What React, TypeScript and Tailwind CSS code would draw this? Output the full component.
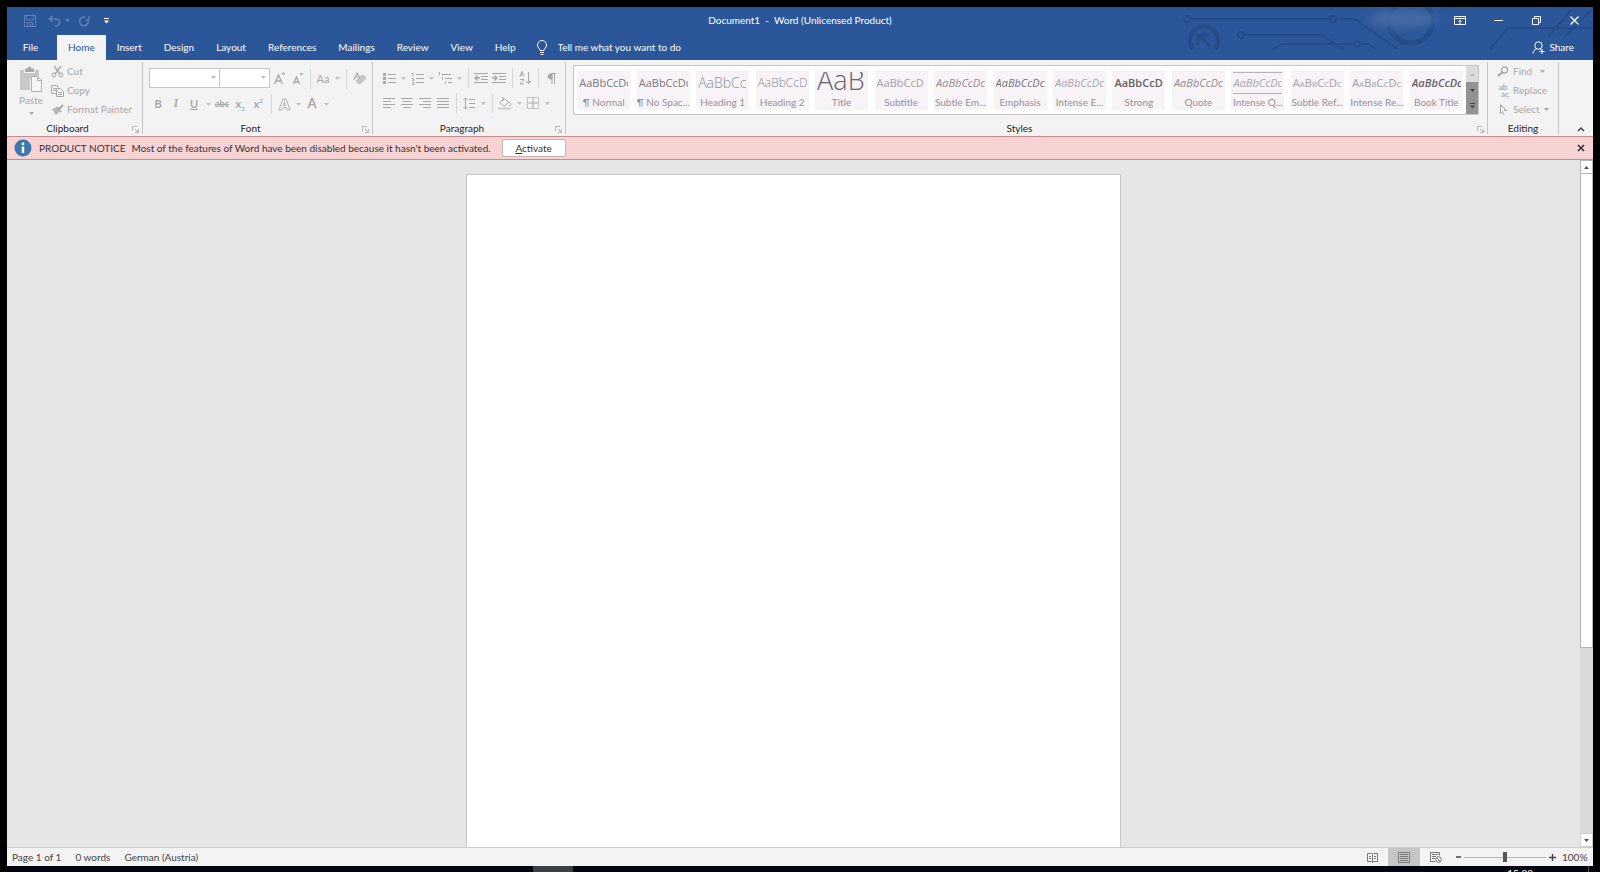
import { ReactNode, useState } from "react";
import clsx from "clsx";

interface IconProps {
  w: number;
  h: number;
  className?: string;
  children: ReactNode;
}

function Icon({ w, h, className, children }: IconProps) {
  return (
    <svg
      width={w}
      height={h}
      viewBox={`0 0 ${w} ${h}`}
      fill="none"
      stroke="currentColor"
      className={clsx("shrink-0", className)}
      aria-hidden="true">
      {children}
    </svg>
  );
}

function CaretIcon() {
  return (
    <Icon w={5} h={3}>
      <path d="M0 0h5L2.500 3z" fill="currentColor" stroke="none" />
    </Icon>
  );
}

function Caret({ label }: { label: string }) {
  return (
    <button aria-label={label} className="flex h-5 w-[10px] items-center justify-center text-[#c0c0c0]">
      <CaretIcon />
    </button>
  );
}

function Tool({ label, children }: { label: string; children: ReactNode }) {
  return (
    <button aria-label={label} className="flex h-5 w-[18px] items-center justify-center text-[#a8a8a8]">
      {children}
    </button>
  );
}

function Sep() {
  return (
    <span className="flex w-2 justify-center">
      <span className="h-5 w-px bg-[#d6d6d6]" />
    </span>
  );
}

interface GroupProps {
  name: string;
  launcher?: boolean;
  className?: string;
  children: ReactNode;
}

function Group({ name, launcher, className, children }: GroupProps) {
  return (
    <section
      aria-label={name}
      className={clsx("my-[2px] flex flex-col border-r border-[#c6c6c6]", className)}>
      <div className="h-[60px]">{children}</div>
      <div
        className={clsx(
          "relative flex h-3 items-center justify-center text-[#262626]",
          launcher && "pr-[14px]"
        )}>
        {name}
        {launcher && (
          <button aria-label={`${name} settings`} className="absolute right-[3px] bottom-[1px] text-[#b8b8b8]">
            <Icon w={7} h={7}>
              <path d="M.5 5V.5H5M3 3l3 3M6.500 3v3.500H3" />
            </Icon>
          </button>
        )}
      </div>
    </section>
  );
}

function Combo({ label, className }: { label: string; className: string }) {
  return (
    <span className={clsx("relative block", className)}>
      <select aria-label={label} className="h-5 w-full appearance-none border border-[#c6c6c6] bg-white" />
      <span className="pointer-events-none absolute top-2 right-1 text-[#c0c0c0]">
        <CaretIcon />
      </span>
    </span>
  );
}

const TABS = ["Home", "Insert", "Design", "Layout", "References", "Mailings", "Review", "View", "Help"];

const STYLES = [
  { name: "¶ Normal", look: "text-[11px] leading-[22px] text-[#7c787c]" },
  { name: "¶ No Spac...", look: "text-[11px] leading-[22px] text-[#7c787c]" },
  { name: "Heading 1", look: "text-[14px] leading-[22px] font-light text-[#8f8b8f]", sample: "AaBbCc" },
  { name: "Heading 2", look: "text-[12px] leading-[22px] font-light text-[#8f8b8f]", sample: "AaBbCcD" },
  { name: "Title", look: "text-[27px] leading-4 font-light text-[#6a666a]", sample: "AaB" },
  { name: "Subtitle", look: "text-[11px] leading-[22px] text-[#a5a1a5]", sample: "AaBbCcD" },
  { name: "Subtle Em...", look: "text-[11px] leading-[22px] italic text-[#928e92]" },
  { name: "Emphasis", look: "text-[11px] leading-[22px] italic text-[#777377]" },
  { name: "Intense E...", look: "text-[11px] leading-[22px] italic text-[#aaa6aa]" },
  { name: "Strong", look: "text-[11px] leading-[22px] font-semibold text-[#666266]" },
  { name: "Quote", look: "text-[11px] leading-[22px] italic text-[#928e92]" },
  { name: "Intense Q...", look: "text-[11px] leading-[20px] italic text-[#aaa6aa] border-y border-[#b5b1b5]" },
  { name: "Subtle Ref...", look: "text-[11px] leading-[22px] [font-variant-caps:small-caps] text-[#a5a1a5]" },
  { name: "Intense Re...", look: "text-[11px] leading-[22px] [font-variant-caps:small-caps] text-[#a09ca0]" },
  { name: "Book Title", look: "text-[11px] leading-[22px] font-semibold italic text-[#666266]" },
];

function TitleBar() {
  return (
    <div className="grid h-7 grid-cols-[1fr_auto_1fr] items-center pb-px text-white">
      <div className="flex items-center pl-[17px] text-[#5f80bb]">
        <button aria-label="Save">
          <Icon w={12} h={12}>
            <path d="M.5.5h11v11H.5zM2.500.500v4.500h7V.500M3.500 11.500v-4h5v4M6.500 9v2" />
          </Icon>
        </button>
        <button aria-label="Undo" className="ml-3">
          <Icon w={13} h={12}>
            <path d="M4.500 1L1.500 4l3 3M2 4h6a3.500 3.500 0 010 7H7" strokeWidth="1.600" />
          </Icon>
        </button>
        <button aria-label="Undo history" className="ml-1">
          <CaretIcon />
        </button>
        <button aria-label="Repeat" className="ml-2">
          <Icon w={12} h={12}>
            <path d="M7 2.200A4.300 4.300 0 1010.300 6M7.500 5h3.500V1" strokeWidth="1.500" />
          </Icon>
        </button>
        <button aria-label="Customize Quick Access Toolbar" className="ml-[14px] text-white">
          <Icon w={5} h={6}>
            <path d="M0 .5h5" />
            <path d="M0 2.500h5L2.500 5.500z" fill="currentColor" stroke="none" />
          </Icon>
        </button>
      </div>
      <h1>Document1&nbsp; -&nbsp; Word (Unlicensed Product)</h1>
      <div className="flex justify-end">
        <button aria-label="Ribbon Display Options" className="flex w-[38px] justify-center">
          <Icon w={12} h={9}>
            <path d="M.5.5h11v8H.5zM.5 2.500h11M6 8V4M4.500 5.500L6 4l1.500 1.500" />
          </Icon>
        </button>
        <button aria-label="Minimize" className="flex w-[38px] items-center justify-center">
          <Icon w={9} h={1}>
            <path d="M0 .5h9" />
          </Icon>
        </button>
        <button aria-label="Restore" className="flex w-[38px] justify-center">
          <Icon w={9} h={9}>
            <path d="M.5 2.500h6v6h-6zM2.500 2.500v-2h6v6h-2" />
          </Icon>
        </button>
        <button aria-label="Close" className="flex w-[38px] justify-center">
          <Icon w={9} h={9}>
            <path d="M.5.5l8 8M8.500.5l-8 8" strokeWidth="1.200" />
          </Icon>
        </button>
      </div>
    </div>
  );
}

function Circuit() {
  return (
    <svg
      width="413"
      height="53"
      viewBox="0 0 413 53"
      fill="none"
      stroke="#244c8a"
      strokeWidth="2"
      className="pointer-events-none absolute top-0 right-0"
      aria-hidden="true">
      <defs>
        <filter id="soft" x="-30%" y="-80%" width="160%" height="260%">
          <feGaussianBlur stdDeviation="4" />
        </filter>
      </defs>
      <circle cx="7" cy="12" r="3" />
      <path d="M10 12h140M156 12h14q7 0 12 5l35 25" />
      <circle cx="153" cy="12" r="3" />
      <path d="M13 42a14 14 0 1122 0" strokeWidth="4" />
      <path d="M31 40L19 28M18 38V28h11" strokeWidth="3" />
      <circle cx="61" cy="28" r="3" />
      <path d="M64 28h77l22 14M93 42l9-5h72" />
      <circle cx="177" cy="37" r="3" />
      <path d="M180 37h8l8 5" />
      <circle cx="231" cy="14" r="22" strokeWidth="5" />
      <path d="M310 42l18-21h85M368 30l23-27M385 30l26-27" />
      <ellipse cx="223" cy="12" rx="34" ry="9" fill="#4469a6" stroke="none" filter="url(#soft)" />
    </svg>
  );
}

function TabRow() {
  const [active, setActive] = useState("Home");

  return (
    <div className="flex h-[25px] items-stretch text-white">
      <button className="mr-[3px] w-[47px]">File</button>
      <nav className="flex">
        {TABS.map((tab) => (
          <button
            key={tab}
            onClick={() => setActive(tab)}
            className={clsx("px-[11px]", tab === active && "bg-[#f3f3f3] text-[#2b579a]")}>
            {tab}
          </button>
        ))}
      </nav>
      <label className="ml-[9px] flex items-center gap-[10px]">
        <Icon w={12} h={15}>
          <path d="M4 10.500c0-2-2.500-2.500-2.500-5.500a4.500 4.500 0 019 0c0 3-2.500 3.500-2.500 5.500zM4 12.500h4M4.500 14.500h3" />
        </Icon>
        <input
          aria-label="Tell me what you want to do"
          placeholder="Tell me what you want to do"
          className="w-44 bg-transparent outline-none placeholder:text-white"
        />
      </label>
      <button className="mr-[19px] ml-auto flex items-center gap-1">
        <Icon w={13} h={13}>
          <circle cx="6.500" cy="4.500" r="3.700" />
          <path d="M1 12.500c0-2 1-3.500 3.500-4.500M8 8l1.500 1M10 8v5M7.500 10.500h5" />
        </Icon>
        Share
      </button>
    </div>
  );
}

function ClipboardGroup() {
  return (
    <Group name="Clipboard" launcher className="w-[136px]">
      <div className="flex text-[#a8a8a8]">
        <button className="ml-3 flex w-6 flex-col items-center pt-1">
          <Icon w={24} h={26}>
            <path d="M1 4h4v3h11V4h4v6h-6l-3 3v11H1z" fill="#c8c8c8" stroke="none" />
            <path d="M6 2.500h2.500a2 2 0 014 0H15V6H6z" fill="#a8a8a8" stroke="none" />
            <path d="M12.500 10.500h6l4 4v11h-10zM18.500 10.500v4h4" fill="#f6f6f6" stroke="#b0b0b0" />
          </Icon>
          <span className="leading-4">Paste</span>
          <span className="mt-1">
            <CaretIcon />
          </span>
        </button>
        <div className="ml-2 flex flex-col">
          <button className="flex h-[19px] items-center gap-[3px]">
            <Icon w={13} h={13}>
              <path d="M3 1l6 8M10 1L4 9" strokeWidth="1.400" />
              <circle cx="3" cy="10" r="2" />
              <circle cx="10" cy="10" r="2" />
            </Icon>
            Cut
          </button>
          <button className="flex h-[19px] items-center gap-[3px]">
            <Icon w={13} h={12}>
              <path d="M5 8.500H.5v-8h5l2 2M2 3.500h3M2 5.500h3M5.500 3.500h4l3 3v5h-7zM7 7.500h4M7 9.500h4" />
            </Icon>
            Copy
          </button>
          <button className="flex h-[19px] items-center gap-[3px]">
            <Icon w={13} h={12}>
              <path d="M1 5l5-2 3 4-4 4z" fill="#b5b5b5" stroke="none" />
              <path d="M6 3l4 5M8 5l4-4" strokeWidth="1.800" />
            </Icon>
            Format Painter
          </button>
        </div>
      </div>
    </Group>
  );
}

function FontGroup() {
  return (
    <Group name="Font" launcher className="w-[230px]">
      <div className="flex items-center pt-[6px] pl-[6px] leading-5">
        <Combo label="Font" className="w-[71px]" />
        <Combo label="Font Size" className="-ml-px w-[51px]" />
        <Tool label="Increase Font Size">
          <Icon w={13} h={13}>
            <path d="M1.500 12L5.500 3l4 9M3 9h5" strokeWidth="1.300" />
            <path d="M8.500 2.500h4L10.500 0z" fill="currentColor" stroke="none" />
          </Icon>
        </Tool>
        <Tool label="Decrease Font Size">
          <Icon w={13} h={13}>
            <path d="M2.500 12L5.500 5l3 7M3.500 10h4" strokeWidth="1.300" />
            <path d="M8.500 1h4l-2 2.500z" fill="currentColor" stroke="none" />
          </Icon>
        </Tool>
        <Sep />
        <Tool label="Change Case">
          <span className="text-[11px]">Aa</span>
        </Tool>
        <Caret label="Change Case options" />
        <Sep />
        <Tool label="Clear All Formatting">
          <Icon w={13} h={13}>
            <path d="M1 8l3-7 3 5M2.500 5h3" strokeWidth="1.200" />
            <path d="M3.500 9l6-6 3 3-6 6z" fill="#c8c8c8" />
          </Icon>
        </Tool>
      </div>
      <div className="flex items-center pt-[5px] pl-[6px]">
        <Tool label="Bold">
          <b className="text-[11px]">B</b>
        </Tool>
        <Tool label="Italic">
          <i className="font-serif text-[11px] font-bold">I</i>
        </Tool>
        <Tool label="Underline">
          <u className="text-[11px] font-bold">U</u>
        </Tool>
        <Caret label="Underline options" />
        <Tool label="Strikethrough">
          <s className="text-[9px] font-bold">abc</s>
        </Tool>
        <Tool label="Subscript">
          <b className="text-[11px]">x</b>
          <span className="mt-2 text-[6px] font-bold">2</span>
        </Tool>
        <Tool label="Superscript">
          <b className="text-[11px]">x</b>
          <span className="mb-2 text-[6px] font-bold">2</span>
        </Tool>
        <Sep />
        <Tool label="Text Effects">
          <Icon w={13} h={13}>
            <path d="M1 12L5 1h3l4 11H9L8 9.500H5L4 12zM6.500 4L5.500 7.500h2z" strokeWidth="0.900" />
          </Icon>
        </Tool>
        <Caret label="Text Effects options" />
        <Tool label="Font Color">
          <span className="text-[13px] font-bold">A</span>
        </Tool>
        <Caret label="Font Color options" />
      </div>
    </Group>
  );
}

function ParagraphGroup() {
  return (
    <Group name="Paragraph" launcher className="w-[193px]">
      <div className="flex items-center pt-[6px] pl-[7px]">
        <Tool label="Bullets">
          <Icon w={13} h={13}>
            <path d="M5 2.500h8M5 6.500h8M5 10.500h8" />
            <path d="M0 1h3v3H0zM0 5h3v3H0zM0 9h3v3H0z" fill="currentColor" stroke="none" />
          </Icon>
        </Tool>
        <Caret label="Bullet library" />
        <Tool label="Numbering">
          <Icon w={13} h={13}>
            <path d="M5 2.500h8M5 6.500h8M5 10.500h8M1 1.500h1v3M1 6.500h1.500v2H1M1 10.500h2v2H1" />
          </Icon>
        </Tool>
        <Caret label="Numbering library" />
        <Tool label="Multilevel List">
          <Icon w={15} h={13}>
            <path d="M1.500 0v3M4 2.500h9M4.500 5v3M7 6.500h7M7.500 9v3M10 10.500h4" />
          </Icon>
        </Tool>
        <Caret label="List library" />
        <Sep />
        <Tool label="Decrease Indent">
          <Icon w={14} h={12}>
            <path d="M0 1.500h14M7 4.500h7M7 7.500h7M0 10.500h14" />
            <path d="M1 6h5M3.500 3.500L1 6l2.500 2.500" strokeWidth="1.400" />
          </Icon>
        </Tool>
        <Tool label="Increase Indent">
          <Icon w={14} h={12}>
            <path d="M0 1.500h14M7 4.500h7M7 7.500h7M0 10.500h14" />
            <path d="M0 6h5M2.500 3.500L5 6 2.500 8.500" strokeWidth="1.400" />
          </Icon>
        </Tool>
        <Sep />
        <Tool label="Sort">
          <Icon w={13} h={14}>
            <path d="M1 5.500l2-5 2 5M1.500 4h3M1 8.500h4l-4 4.500h4M9.500 1v11M7 10l2.500 2.500L12 10" />
          </Icon>
        </Tool>
        <Sep />
        <Tool label="Show Paragraph Marks">
          <Icon w={9} h={11}>
            <path d="M5 1H3.500a2.500 2.500 0 000 5H5z" fill="currentColor" />
            <path d="M5 .5V11M7.500 .5V11M4 .5h5" />
          </Icon>
        </Tool>
      </div>
      <div className="flex items-center pt-[5px] pl-[7px]">
        <Tool label="Align Left">
          <Icon w={12} h={10}>
            <path d="M0 .5h12M0 3.500h8M0 6.500h12M0 9.500h8" />
          </Icon>
        </Tool>
        <Tool label="Center">
          <Icon w={12} h={10}>
            <path d="M0 .5h12M2 3.500h8M0 6.500h12M2 9.500h8" />
          </Icon>
        </Tool>
        <Tool label="Align Right">
          <Icon w={12} h={10}>
            <path d="M0 .5h12M4 3.500h8M0 6.500h12M4 9.500h8" />
          </Icon>
        </Tool>
        <Tool label="Justify">
          <Icon w={12} h={10}>
            <path d="M0 .5h12M0 3.500h12M0 6.500h12M0 9.500h12" />
          </Icon>
        </Tool>
        <Sep />
        <Tool label="Line Spacing">
          <Icon w={13} h={13}>
            <path d="M6 2.500h6M6 6.500h6M6 10.500h6M2.500 1v11M.5 3l2-2 2 2M.5 10l2 2 2-2" />
          </Icon>
        </Tool>
        <Caret label="Line Spacing options" />
        <Sep />
        <Tool label="Shading">
          <Icon w={14} h={13}>
            <path d="M2 5.500L6.500 1.500l4 4L6 9.500zM5 4V0M11 5c1.500 1 2 2 1.500 4" />
            <path d="M0 11.500h13" stroke="#cfcfcf" strokeWidth="2" />
          </Icon>
        </Tool>
        <Caret label="Shading options" />
        <Tool label="Borders">
          <Icon w={12} h={12}>
            <path d="M.5.5h11v11H.5z" stroke="#c4c4c4" />
            <path d="M6 .5v11M.5 6h11" />
          </Icon>
        </Tool>
        <Caret label="Borders options" />
      </div>
    </Group>
  );
}

function StylesGroup() {
  return (
    <Group name="Styles" launcher className="min-w-0 flex-1">
      <div className="pt-[3px] pr-2 pl-[7px]">
        <div className="flex h-[50px] border border-[#c6c6c6] bg-white">
          <div className="flex min-w-0 flex-1 items-center">
            {STYLES.map(({ name, look, sample }) => (
              <button key={name} className="flex min-w-0 flex-1 justify-center">
                <span className="flex h-10 w-[53px] flex-col items-center bg-[#f7f3f7] pt-[2px]">
                  <span
                    className={clsx(
                      "h-[22px] w-[49px] overflow-hidden text-left font-['Open_Sans','Noto_Sans',sans-serif] whitespace-nowrap",
                      look
                    )}>
                    {sample ?? "AaBbCcDc"}
                  </span>
                  <span className="h-4 leading-4 whitespace-nowrap text-[#969296]">{name}</span>
                </span>
              </button>
            ))}
          </div>
          <div className="flex w-3 flex-col text-[#444]">
            <button aria-label="Previous styles" className="flex flex-1 items-center justify-center bg-[#dcdcdc] text-[#b5b5b5]">
              <Icon w={5} h={3}>
                <path d="M0 3h5L2.500 0z" fill="currentColor" stroke="none" />
              </Icon>
            </button>
            <button aria-label="Next styles" className="flex flex-1 items-center justify-center bg-[#929292]">
              <CaretIcon />
            </button>
            <button aria-label="More styles" className="flex flex-1 items-center justify-center bg-[#929292]">
              <Icon w={5} h={6}>
                <path d="M0 .5h5" />
                <path d="M0 2.500h5L2.500 5.500z" fill="currentColor" stroke="none" />
              </Icon>
            </button>
          </div>
        </div>
      </div>
    </Group>
  );
}

function EditingGroup() {
  return (
    <Group name="Editing" className="w-[71px]">
      <div className="flex flex-col pl-[9px] text-[#a8a8a8]">
        <button className="flex h-[19px] items-center gap-1">
          <Icon w={12} h={11}>
            <circle cx="7.500" cy="4" r="3" strokeWidth="1.300" />
            <path d="M5 6.500L1 10" strokeWidth="2" />
          </Icon>
          Find
          <span className="ml-1">
            <CaretIcon />
          </span>
        </button>
        <button className="flex h-[19px] items-center gap-1">
          <span className="flex w-3 flex-col text-[8px] leading-[7px] font-bold">
            <span>ab</span>
            <span className="text-right">ac</span>
          </span>
          Replace
        </button>
        <button className="flex h-[19px] items-center gap-1">
          <Icon w={12} h={12}>
            <path d="M3.500.5v9l2-2 1.500 3.500M3.500.5l6 6H7" />
          </Icon>
          Select
          <CaretIcon />
        </button>
      </div>
    </Group>
  );
}

function Notice() {
  return (
    <div role="alert" className="flex h-6 items-center border-y border-[#c58b8d] bg-[#f8d3d3] pr-2 pl-[7px] text-[#333]">
      <Icon w={18} h={18}>
        <circle cx="9" cy="9" r="8.500" fill="#3a78b0" stroke="none" />
        <path d="M9 7.500V14" stroke="#fff" strokeWidth="2.400" />
        <circle cx="9" cy="4.800" r="1.400" fill="#fff" stroke="none" />
      </Icon>
      <strong className="ml-[7px] font-normal">PRODUCT NOTICE</strong>
      <span className="ml-[6px]">Most of the features of Word have been disabled because it hasn't been activated.</span>
      <button className="ml-[11px] h-[18px] w-16 border border-[#c9b3b3] bg-white leading-4">
        <u>A</u>ctivate
      </button>
      <button aria-label="Close notice" className="ml-auto text-[#333]">
        <Icon w={8} h={8}>
          <path d="M1 1l6 6M7 1L1 7" strokeWidth="1.600" />
        </Icon>
      </button>
    </div>
  );
}

function ScrollBar() {
  return (
    <div className="flex w-[13px] flex-col bg-[#dadada]">
      <button aria-label="Scroll up" className="flex h-[14px] items-center justify-center border border-[#b5b5b5] bg-white text-[#555]">
        <Icon w={5} h={3}>
          <path d="M0 3h5L2.500 0z" fill="currentColor" stroke="none" />
        </Icon>
      </button>
      <div className="flex-1">
        <div className="h-[72%] border border-t-0 border-[#b5b5b5] bg-white" />
      </div>
      <button aria-label="Scroll down" className="flex h-[14px] items-center justify-center border border-[#cfcfcf] bg-white text-[#555]">
        <CaretIcon />
      </button>
    </div>
  );
}

function StatusBar() {
  const [zoom, setZoom] = useState(100);

  return (
    <footer className="flex h-[19px] items-center border-t border-[#cdcdcd] bg-[#f3f3f3] pr-[7px] pl-[5px] text-[#444]">
      <span>Page 1 of 1</span>
      <span className="ml-[14px]">0 words</span>
      <span className="ml-[14px]">German (Austria)</span>
      <div className="ml-auto flex items-center self-stretch text-[#777]">
        <button aria-label="Read Mode" className="flex w-8 justify-center">
          <Icon w={11} h={11}>
            <path d="M.5 1.500h4l1 1 1-1h4v8h-4l-1 1-1-1h-4zM5.500 2.500v8M2 4.500h2M2 6.500h2M7 4.500h2M7 6.500h2" />
          </Icon>
        </button>
        <button aria-label="Print Layout" className="flex w-8 items-center justify-center self-stretch bg-[#c6c6c6]">
          <Icon w={12} h={11}>
            <path d="M.5.5h11v10H.5zM2 2.500h8M2 4.500h8M2 6.500h8M2 8.500h8" />
          </Icon>
        </button>
        <button aria-label="Web Layout" className="flex w-8 justify-center">
          <Icon w={12} h={11}>
            <path d="M5 9.500H.5v-9h9v3M2 2.500h6M2 4.500h4M2 6.500h3" />
            <circle cx="8.500" cy="7.500" r="2.800" />
            <path d="M7 6l3 3" />
          </Icon>
        </button>
        <button aria-label="Zoom out" onClick={() => setZoom(zoom - 10)} className="flex w-3 justify-center text-[#444]">
          <Icon w={5} h={2}>
            <path d="M0 1h5" strokeWidth="1.500" />
          </Icon>
        </button>
        <input
          type="range"
          aria-label="Zoom"
          min={10}
          max={190}
          value={zoom}
          onChange={(e) => setZoom(Number(e.target.value))}
          className="h-[10px] w-[82px] appearance-none bg-[linear-gradient(#b5b5b5,#b5b5b5)] bg-[length:100%_1px] bg-center bg-no-repeat [&::-webkit-slider-thumb]:h-[10px] [&::-webkit-slider-thumb]:w-1 [&::-webkit-slider-thumb]:appearance-none [&::-webkit-slider-thumb]:bg-[#555]"
        />
        <button aria-label="Zoom in" onClick={() => setZoom(zoom + 10)} className="flex w-3 justify-center text-[#444]">
          <Icon w={7} h={7}>
            <path d="M0 3.500h7M3.500 0v7" strokeWidth="1.400" />
          </Icon>
        </button>
        <span className="ml-1 w-6 text-right text-[#444]">{zoom}%</span>
      </div>
    </footer>
  );
}

export default function App() {
  return (
    <div className="flex h-screen flex-col overflow-hidden bg-black px-[7px] pt-[7px] font-['Lato','Open_Sans',sans-serif] text-[10px]">
      <header className="relative bg-[#2b579a]">
        <Circuit />
        <div className="relative">
          <TitleBar />
          <TabRow />
        </div>
      </header>
      <div className="flex h-[76px] bg-[#f3f3f3]">
        <ClipboardGroup />
        <FontGroup />
        <ParagraphGroup />
        <StylesGroup />
        <EditingGroup />
        <button aria-label="Collapse the Ribbon" className="flex w-[34px] items-end justify-end pr-2 pb-1 text-[#444]">
          <Icon w={8} h={6}>
            <path d="M1 5l3-3 3 3" strokeWidth="1.500" />
          </Icon>
        </button>
      </div>
      <Notice />
      <main className="flex min-h-0 flex-1 bg-[#e6e6e6]">
        <div className="flex flex-1 justify-center overflow-hidden pt-[14px]">
          <article aria-label="Document" className="w-[655px] border border-b-0 border-[#c9c9c9] bg-white" />
        </div>
        <ScrollBar />
      </main>
      <StatusBar />
      <div className="flex h-[6px] shrink-0 overflow-hidden bg-[#02050f] text-white">
        <span className="ml-[526px] w-10 bg-[#3a3d44]" />
        <time className="mt-px mr-[55px] ml-auto leading-3">15:28</time>
        <span className="mr-1 w-px bg-[#555]" />
      </div>
    </div>
  );
}
